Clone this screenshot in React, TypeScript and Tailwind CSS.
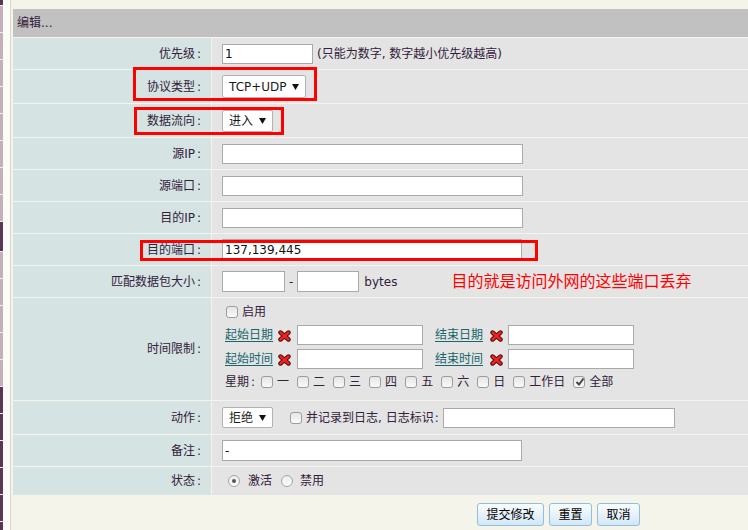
import React from "react";

const font = "font-['DejaVu_Sans','Noto_Sans_CJK_SC',sans-serif]";

// left edge of the sidebar that peeks in: [height, dark]
const strip: [number, boolean][] = [
  [5, true], [26, false], [26, false], [26, false], [26, false], [26, false],
  [26, false], [26, false], [26, false], [29, true], [26, false], [26, false],
  [26, false], [26, false], [26, false], [26, true], [26, true], [26, true],
  [26, true], [26, true], [20, true],
];

function Label({ text }: { text: string }) {
  return (
    <span className="whitespace-nowrap">
      {text}
      <span className="ml-[2px]">:</span>
    </span>
  );
}

function Row({ label, h, children }: { label: string; h: string; children?: React.ReactNode }) {
  return (
    <div className="flex border-t border-[#f4f4ea]">
      <div className={`flex w-[198px] shrink-0 items-center justify-end bg-[#d5e3e3] pr-[10px] ${h}`}>
        <Label text={label} />
      </div>
      <div className="flex flex-1 items-center border-l border-[#f4f4ea] bg-[#e4e4e4] pl-[10px]">{children}</div>
    </div>
  );
}

function TextBox({ w, value = "", h = "h-[20px]" }: { w: string; value?: string; h?: string }) {
  return (
    <input
      readOnly
      value={value}
      className={`${w} ${h} shrink-0 border border-[#a9a9a9] bg-white px-[2px] text-[12px] text-[#111] outline-none`}
    />
  );
}

function Select({ text, w, h = "h-[22px]" }: { text: string; w: string; h?: string }) {
  return (
    <div className={`${w} ${h} flex shrink-0 items-center justify-between rounded-[2px] border border-[#b2b2b2] bg-white pl-[6px] pr-[6px] text-[#1a1a1a]`}>
      <span>{text}</span>
      <svg width="7" height="6" viewBox="0 0 7 6">
        <polygon points="0,0 7,0 3.5,6" fill="#111" />
      </svg>
    </div>
  );
}

function Check({ checked = false }: { checked?: boolean }) {
  return (
    <span className="relative inline-flex h-[12px] w-[12px] shrink-0 rounded-[3px] border border-[#9c9c9c] bg-linear-to-b from-[#e6e6e6] to-[#fafafa]">
      {checked && (
        <svg className="absolute left-[1px] top-[0px]" width="10" height="10" viewBox="0 0 10 10">
          <path d="M1.5 5 L4 7.5 L8.5 1.5" stroke="#444" strokeWidth="2" fill="none" />
        </svg>
      )}
    </span>
  );
}

function Radio({ checked = false }: { checked?: boolean }) {
  return (
    <span className="inline-flex h-[12px] w-[12px] shrink-0 items-center justify-center rounded-full border border-[#a5a5a5] bg-linear-to-b from-[#ececec] to-[#fcfcfc]">
      {checked && <span className="h-[4px] w-[4px] rounded-full bg-[#555]" />}
    </span>
  );
}

function RedX() {
  return (
    <svg className="mt-[2px] shrink-0 self-start" width="13" height="12" viewBox="0 0 13 12">
      <path d="M2.5 2.5 L10.5 9.5 M10.5 2.5 L2.5 9.5" stroke="#4a0a0a" strokeWidth="4.4" strokeLinecap="round" />
      <path d="M2.5 2.5 L10.5 9.5 M10.5 2.5 L2.5 9.5" stroke="#f22020" strokeWidth="2.4" strokeLinecap="round" />
    </svg>
  );
}

function Link({ text }: { text: string }) {
  return <span className="whitespace-nowrap text-[#17646c] underline underline-offset-[2px]">{text}</span>;
}

const days = ["一", "二", "三", "四", "五", "六", "日", "工作日"];

export default function App() {
  return (
    <div className={`relative flex h-[530px] w-[748px] overflow-hidden bg-[#f4f4ea] text-[12px] leading-[14px] text-[#33203a] ${font}`}>
      {/* sidebar edge */}
      <div className="flex w-[3px] shrink-0 flex-col">
        {strip.map(([h, dark], i) => (
          <div
            key={i}
            className={`shrink-0 border-b border-[#f2eef0] ${dark ? "bg-[#5b3755]" : "bg-[#c4b0b6]"}`}
            style={{ height: h + 1 }}
          />
        ))}
      </div>
      <div className="w-[7px] shrink-0 bg-[#fbfbf7]" />
      <div className="w-[1px] shrink-0 bg-[#d8d8c8]" />
      <div className="w-[2px] shrink-0" />

      <div className="flex flex-1 flex-col pt-[9px]">
        <div className="flex h-[28px] items-center bg-[#c1c1c1] pl-[4px]">编辑...</div>

        <Row label="优先级" h="h-[31px]">
          <TextBox w="w-[91px]" value="1" />
          <span className="ml-[4px] whitespace-nowrap">(只能为数字, 数字越小优先级越高)</span>
        </Row>
        <Row label="协议类型" h="h-[33px]">
          <Select text="TCP+UDP" w="w-[84px]" h="h-[23px]" />
        </Row>
        <Row label="数据流向" h="h-[33px]">
          <Select text="进入" w="w-[51px]" />
        </Row>
        <Row label="源IP" h="h-[31px]">
          <TextBox w="w-[301px]" />
        </Row>
        <Row label="源端口" h="h-[31px]">
          <TextBox w="w-[301px]" />
        </Row>
        <Row label="目的IP" h="h-[31px]">
          <TextBox w="w-[301px]" />
        </Row>
        <Row label="目的端口" h="h-[31px]">
          <TextBox w="w-[300px]" h="h-[21px]" value="137,139,445" />
        </Row>
        <Row label="匹配数据包大小" h="h-[31px]">
          <TextBox w="w-[63px]" h="h-[21px]" />
          <span className="mx-[4px]">-</span>
          <TextBox w="w-[62px]" h="h-[21px]" />
          <span className="ml-[5px]">bytes</span>
          <span className="ml-[54px] whitespace-nowrap text-[16px] leading-[18px] text-[#ff0000]">
            目的就是访问外网的这些端口丢弃
          </span>
        </Row>

        {/* time limit */}
        <div className="flex border-t border-[#f4f4ea]">
          <div className="flex h-[102px] w-[198px] shrink-0 items-center justify-end bg-[#d5e3e3] pr-[10px]">
            <Label text="时间限制" />
          </div>
          <div className="flex flex-1 flex-col border-l border-[#f4f4ea] bg-[#e4e4e4] pl-[13px] pt-[4px]">
            <div className="flex h-[20px] items-center pl-[1px]">
              <Check />
              <span className="ml-[4px]">启用</span>
            </div>
            <div className="mt-[3px] flex h-[20px] items-center">
              <Link text="起始日期" />
              <span className="ml-[5px] flex"><RedX /></span>
              <span className="ml-[6px] flex"><TextBox w="w-[126px]" /></span>
              <span className="ml-[12px]"><Link text="结束日期" /></span>
              <span className="ml-[7px] flex"><RedX /></span>
              <span className="ml-[5px] flex"><TextBox w="w-[126px]" /></span>
            </div>
            <div className="mt-[4px] flex h-[20px] items-center">
              <Link text="起始时间" />
              <span className="ml-[5px] flex"><RedX /></span>
              <span className="ml-[6px] flex"><TextBox w="w-[126px]" /></span>
              <span className="ml-[12px]"><Link text="结束时间" /></span>
              <span className="ml-[7px] flex"><RedX /></span>
              <span className="ml-[5px] flex"><TextBox w="w-[126px]" /></span>
            </div>
            <div className="mt-[2px] flex h-[22px] items-center">
              <Label text="星期" />
              <span className="w-[6px]" />
              {days.map((d) => (
                <span key={d} className="mr-[8px] flex items-center">
                  <Check />
                  <span className="ml-[4px]">{d}</span>
                </span>
              ))}
              <span className="flex items-center">
                <Check checked />
                <span className="ml-[4px]">全部</span>
              </span>
            </div>
          </div>
        </div>

        <Row label="动作" h="h-[33px]">
          <Select text="拒绝" w="w-[51px]" h="h-[21px]" />
          <span className="ml-[17px] flex">
            <Check />
          </span>
          <span className="ml-[4px] whitespace-nowrap">
            并记录到日志, 日志标识<span className="ml-[1px]">:</span>
          </span>
          <span className="ml-[4px] flex">
            <TextBox w="w-[232px]" />
          </span>
        </Row>
        <Row label="备注" h="h-[31px]">
          <TextBox w="w-[300px]" h="h-[21px]" value="-" />
        </Row>
        <Row label="状态" h="h-[28px]">
          <span className="ml-[6px] flex">
            <Radio checked />
          </span>
          <span className="ml-[8px]">激活</span>
          <span className="ml-[9px] flex">
            <Radio />
          </span>
          <span className="ml-[7px]">禁用</span>
        </Row>

        <div className="mt-[8px] flex justify-end gap-[5px] pr-[108px]">
          {[
            ["提交修改", "w-[67px]"],
            ["重置", "w-[43px]"],
            ["取消", "w-[43px]"],
          ].map(([t, w]) => (
            <button
              key={t}
              className={`${w} h-[23px] rounded-[3px] border border-[#8dbfe0] bg-linear-to-b from-[#fbfdff] to-[#d3e6f6] text-[12px] text-black`}
            >
              {t}
            </button>
          ))}
        </div>
      </div>

      {/* red annotation boxes */}
      <div className="absolute left-[133px] top-[67px] h-[34px] w-[184px] border-[3px] border-[#ff0000]" />
      <div className="absolute left-[134px] top-[107px] h-[28px] w-[150px] border-[3px] border-[#ff0000]" />
      <div className="absolute left-[140px] top-[240px] h-[21px] w-[398px] border-[3px] border-[#ff0000]" />
    </div>
  );
}
